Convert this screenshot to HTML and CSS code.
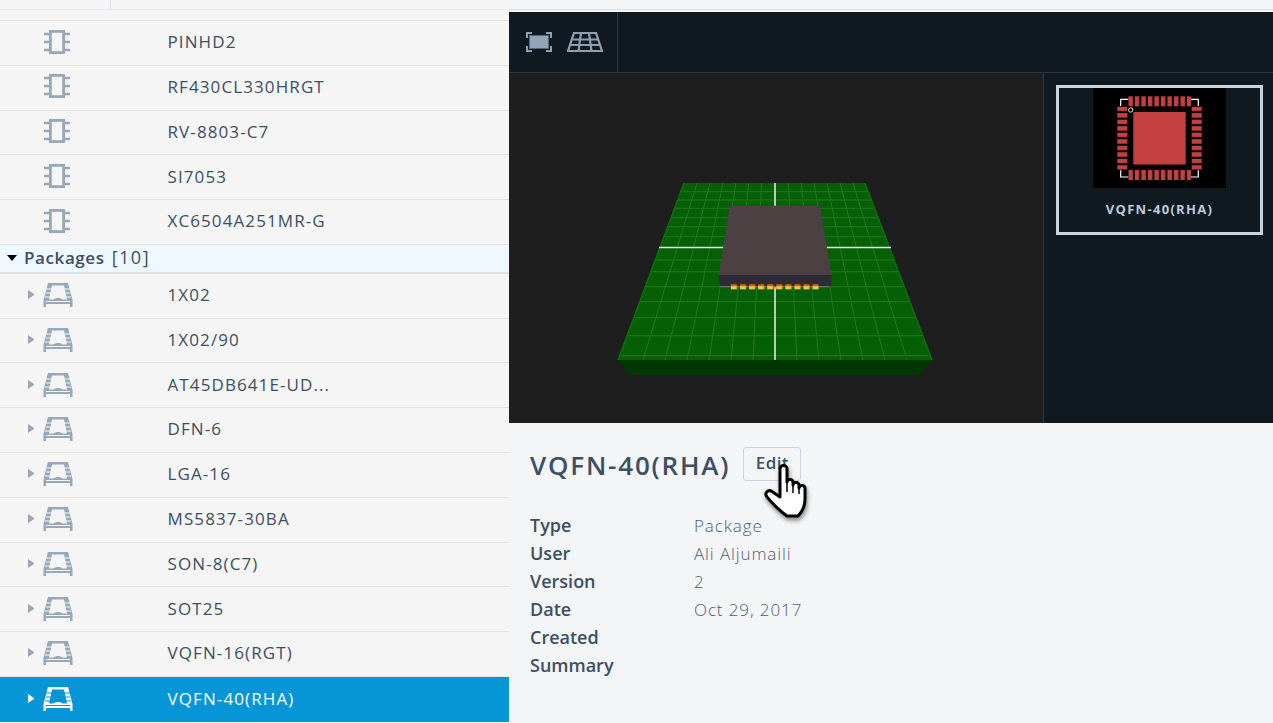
FILE: index.html
```html
<!DOCTYPE html>
<html lang="en">
<head>
    <meta charset="UTF-8">
    <meta name="viewport" content="width=device-width, initial-scale=1.0">
    <title>Library</title>
    <link rel="stylesheet" href="styles.css">
</head>
<body>
    <!-- icons used by the rows -->
    <svg class="defs" width="0" height="0">
        <symbol id="icon-chip" viewBox="0 0 26 24">
            <rect x="6.400" y="1.400" width="13.200" height="21.200" fill="none" stroke="currentColor" stroke-width="2.800"/>
            <path d="M0 4h5M21 4h5M0 12h5M21 12h5M0 20h5M21 20h5" stroke="currentColor" stroke-width="2.600"/>
        </symbol>
        <symbol id="icon-package" viewBox="0 0 30 25">
            <path fill="currentColor" fill-rule="evenodd" d="M5 1H25L29.500 18V25H27V22H3V25H.5V18ZM9 3.500 6 17.500H10.500C12.500 15.500 17.500 15.500 19.500 17.500H24L21 3.500Z"/>
            <path d="M3 7H9M3 11H8M2 15H7M21 7H27M22 11H27M23 15H28" stroke="var(--row-bg)" stroke-width="1"/>
            <path d="M3 19.500H27" stroke="var(--row-bg)" stroke-width="1"/>
        </symbol>
    </svg>

    <aside class="tree">
        <div class="tree-head"><span class="tree-head-cell"></span></div>
        <ul class="rows">
            <li class="row"><span class="cell-icon"><svg class="chip"><use href="#icon-chip"/></svg></span><span class="name">PINHD2</span></li>
            <li class="row"><span class="cell-icon"><svg class="chip"><use href="#icon-chip"/></svg></span><span class="name">RF430CL330HRGT</span></li>
            <li class="row"><span class="cell-icon"><svg class="chip"><use href="#icon-chip"/></svg></span><span class="name">RV-8803-C7</span></li>
            <li class="row"><span class="cell-icon"><svg class="chip"><use href="#icon-chip"/></svg></span><span class="name">SI7053</span></li>
            <li class="row"><span class="cell-icon"><svg class="chip"><use href="#icon-chip"/></svg></span><span class="name">XC6504A251MR-G</span></li>
        </ul>
        <div class="group"><span class="caret-down"></span><strong>Packages</strong> <span class="count">[10]</span></div>
        <ul class="rows">
            <li class="row"><span class="cell-icon"><i class="caret"></i><svg class="pkg"><use href="#icon-package"/></svg></span><span class="name">1X02</span></li>
            <li class="row"><span class="cell-icon"><i class="caret"></i><svg class="pkg"><use href="#icon-package"/></svg></span><span class="name">1X02/90</span></li>
            <li class="row"><span class="cell-icon"><i class="caret"></i><svg class="pkg"><use href="#icon-package"/></svg></span><span class="name">AT45DB641E-UD...</span></li>
            <li class="row"><span class="cell-icon"><i class="caret"></i><svg class="pkg"><use href="#icon-package"/></svg></span><span class="name">DFN-6</span></li>
            <li class="row"><span class="cell-icon"><i class="caret"></i><svg class="pkg"><use href="#icon-package"/></svg></span><span class="name">LGA-16</span></li>
            <li class="row"><span class="cell-icon"><i class="caret"></i><svg class="pkg"><use href="#icon-package"/></svg></span><span class="name">MS5837-30BA</span></li>
            <li class="row"><span class="cell-icon"><i class="caret"></i><svg class="pkg"><use href="#icon-package"/></svg></span><span class="name">SON-8(C7)</span></li>
            <li class="row"><span class="cell-icon"><i class="caret"></i><svg class="pkg"><use href="#icon-package"/></svg></span><span class="name">SOT25</span></li>
            <li class="row"><span class="cell-icon"><i class="caret"></i><svg class="pkg"><use href="#icon-package"/></svg></span><span class="name">VQFN-16(RGT)</span></li>
            <li class="row selected"><span class="cell-icon"><i class="caret"></i><svg class="pkg"><use href="#icon-package"/></svg></span><span class="name">VQFN-40(RHA)</span></li>
        </ul>
    </aside>

    <main class="detail">
        <section class="viewer">
            <div class="toolbar">
                <div class="tools">
                    <svg class="tool-fit" viewBox="0 0 26 20">
                        <path d="M1 6V1H6M20 1H25V6M25 14V19H20M6 19H1V14" fill="none" stroke="#8fa0b2" stroke-width="2"/>
                        <rect x="3.500" y="3.500" width="19" height="13" fill="#93a4b6" stroke="#55677a"/>
                    </svg>
                    <svg class="tool-grid" viewBox="0 0 36 20">
                        <path d="M7 1H29L35 19H1ZM4.500 7.500H31M2.800 13H33M14 1 11.500 19M22 1 24.500 19" fill="none" stroke="#8fa0b2" stroke-width="2.200"/>
                    </svg>
                </div>
            </div>
            <div class="stage">
                <div class="scene">
                    <svg viewBox="509 73 534 350" width="534" height="350">
                        <defs>
                            <pattern id="pkg-pads" x="731" y="284" width="9.060" height="5.500" patternUnits="userSpaceOnUse">
                                <rect width="6" height="2" fill="#b5591c"/>
                                <rect y="2" width="6" height="3.500" fill="#f6c93a"/>
                            </pattern>
                        </defs>
                        <polygon points="618,360 932,360 920,375 630,375" fill="#003600"/>
                        <polygon points="684,183 865,183 932,360 618,360" fill="#056005"/>
                        <g class="grid-lines">
                            <path d="M697.100 183 643 360M710 183 665 360M722.900 183 687 360M735.800 183 709 360M748.700 183 731 360M761.600 183 753 360M788.400 183 797 360M801.300 183 819 360M814.200 183 841 360M827.100 183 863 360M840 183 885 360M852.900 183 907 360"/>
                            <path d="M680.800 191.700H868.300M677.700 200H871.400M674.600 208.300H874.600M671.100 217.700H878.200M667.700 226.700H881.600M664 236.700H885.400M655.300 260H894.200M650.900 271.700H898.600M645.300 286.700H904.300M639.700 301.700H910M633.800 317.700H916M627 335.700H922.800M619.600 355.700H930.400"/>
                        </g>
                        <path d="M684 183 618 360M865 183 932 360" stroke="#0a700a" stroke-width="1.500"/>
                        <path d="M775 183V360M659 247.500H891" stroke="#e4e8e4" stroke-width="1.600"/>
                        <polygon points="720,286 829,286 829,287.300 720,287.300" fill="#6d7070"/>
                        <polygon points="718.700,275 831.700,275 831,286 720,286" fill="#2c2b36"/>
                        <polygon points="730,205.700 820,205.700 831.700,275 718.700,275" fill="#4b4042"/>
                        <rect x="731" y="284" width="88" height="5.500" fill="url(#pkg-pads)"/>
                    </svg>
                </div>
                <div class="thumbs">
                    <div class="thumb">
                        <svg class="thumb-img" viewBox="0 0 133 100" width="133" height="100">
                            <defs>
                                <pattern id="pads-x" x="35.300" y="0" width="6.520" height="100" patternUnits="userSpaceOnUse">
                                    <rect width="4.500" height="100" fill="#c24040"/>
                                </pattern>
                                <pattern id="pads-y" x="0" y="18.600" width="133" height="6.520" patternUnits="userSpaceOnUse">
                                    <rect width="133" height="4.500" fill="#c24040"/>
                                </pattern>
                            </defs>
                            <rect width="133" height="100" fill="#000"/>
                            <path d="M27.700 18V11.300H35.300M98 11.300H105.300V18M27.700 82.300V89H35.300M98 89H105.300V82.300" fill="none" stroke="#fff" stroke-width="1.200"/>
                            <rect x="35.300" y="8.300" width="63" height="10" fill="url(#pads-x)"/>
                            <rect x="35.300" y="82" width="63" height="10" fill="url(#pads-x)"/>
                            <rect x="24.300" y="18.600" width="10" height="63" fill="url(#pads-y)"/>
                            <rect x="98.700" y="18.600" width="10" height="63" fill="url(#pads-y)"/>
                            <rect x="40.300" y="24" width="52.400" height="52.500" fill="#c24040"/>
                            <circle cx="37.700" cy="22" r="2.200" fill="#000" stroke="#ddd" stroke-width="1"/>
                        </svg>
                        <div class="thumb-label">VQFN-40(RHA)</div>
                    </div>
                </div>
            </div>
        </section>

        <section class="info">
            <div class="title-row">
                <h1>VQFN-40(RHA)</h1>
                <button class="edit">Edit</button>
                <svg class="hand" viewBox="0 0 50 60" width="50" height="60">
                    <path d="M18 7a3.500 3.500 0 0 1 7 0V20a3 3 0 0 1 6 1v2a3 3 0 0 1 6 1v2a3 3 0 0 1 6 1V37C43 45 40 50 36 54H25C18 49 10 41 5 35 2 31 6 27 10 29.500L18 35Z" fill="#fff" stroke="#000" stroke-width="3" stroke-linejoin="round"/>
                    <path d="M25 20v10M31 23v8M37 26v6" stroke="#000" stroke-width="1.500"/>
                </svg>
            </div>
            <dl class="meta">
                <dt>Type</dt><dd>Package</dd>
                <dt>User</dt><dd>Ali Aljumaili</dd>
                <dt>Version</dt><dd>2</dd>
                <dt>Date</dt><dd>Oct 29, 2017</dd>
                <dt>Created</dt><dd></dd>
                <dt>Summary</dt><dd></dd>
            </dl>
        </section>
    </main>
</body>
</html>
```

FILE: styles.css
```css
/* Geral */
* {
    box-sizing: border-box;
}

html, body {
    height: 723px;
}

body {
    margin: 0;
    display: flex;
    overflow: hidden;
    font-family: "Open Sans", "Noto Sans", sans-serif;
    color: #3c4f63;
    background-color: #f4f5f7;
}

.defs {
    position: absolute;
}

/* Left tree */
.tree {
    width: 509px;
    flex: none;
    background-color: #f5f5f5;
}

.tree-head {
    height: 21px;
    border-bottom: 1px solid #e2e4e6;
    background: linear-gradient(#f4f5f7 0, #f4f5f7 9px, #e6e7e8 9px, #f5f5f5 11px);
}

.tree-head-cell {
    display: block;
    width: 111px;
    height: 9px;
    border-right: 1px solid #dfe2e5;
}

.rows {
    list-style: none;
    margin: 0;
    padding: 0;
}

.row {
    --row-bg: #f5f5f5;
    height: 44.8px;
    padding-bottom: 2.5px;
    display: grid;
    grid-template-columns: 167.5px 1fr;
    align-items: center;
    border-bottom: 1px solid #e2e2e2;
    font-size: 17px;
    letter-spacing: 1.1px;
}

.cell-icon {
    display: flex;
    align-items: center;
    padding-left: 28px;
    color: #98a8b8;
}

.chip {
    width: 26px;
    height: 24px;
    margin-left: 16px;
}

.pkg {
    width: 30px;
    height: 25px;
    margin-left: 9px;
}

.caret {
    flex: none;
    width: 6px;
    height: 9px;
    border-top: 4.500px solid transparent;
    border-bottom: 4.500px solid transparent;
    border-left: 6px solid #98a8b8;
}

.name {
    white-space: nowrap;
}

.selected {
    --row-bg: #0696d7;
    background-color: #0696d7;
    border-bottom: 0;
    color: #fff;
}

.selected .cell-icon {
    color: #fff;
}

.selected .caret {
    border-left-color: #fff;
}

.group {
    height: 30px;
    margin-top: -1.2px;
    padding: 0 0 2px 7px;
    display: flex;
    align-items: center;
    gap: 7px;
    background-color: #f0f8ff;
    border-top: 1px solid #dbe4ec;
    border-bottom: 2px solid #dde3e8;
    font-size: 17px;
    letter-spacing: 0.6px;
}

.group strong {
    font-weight: 600;
}

.count {
    font-size: 18px;
    letter-spacing: 1.500px;
}

.caret-down {
    width: 0;
    height: 0;
    margin-top: 2px;
    border-left: 5px solid transparent;
    border-right: 5px solid transparent;
    border-top: 6px solid #000;
}

/* Right side */
.detail {
    flex: 1;
    display: flex;
    flex-direction: column;
    background: linear-gradient(#f4f5f7 0, #f4f5f7 9px, #dfe1e3 9px, #dfe1e3 10px, #f4f5f7 10px);
    padding-top: 12px;
}

.viewer {
    height: 411px;
    display: flex;
    flex-direction: column;
    flex: none;
}

.toolbar {
    height: 61px;
    background-color: #101820;
    border-bottom: 1px solid #2a3541;
}

.tools {
    width: 109px;
    height: 60px;
    display: flex;
    align-items: center;
    gap: 15px;
    padding-left: 17px;
    border-right: 1px solid #2a3541;
}

.tool-fit {
    width: 26px;
    height: 20px;
}

.tool-grid {
    width: 36px;
    height: 20px;
}

.stage {
    flex: 1;
    display: flex;
}

.scene {
    width: 534px;
    background-color: #1e1e1e;
}

.scene svg {
    display: block;
}

.grid-lines path {
    fill: none;
    stroke: #237623;
    stroke-width: 1;
}

.thumbs {
    flex: 1;
    padding: 12px 10px 0 12px;
    background-color: #101820;
    border-left: 1px solid #2a3541;
}

.thumb {
    height: 150px;
    display: flex;
    flex-direction: column;
    align-items: center;
    border: 3px solid #c8d3e0;
}

.thumb-img {
    display: block;
    flex: none;
}

.thumb-label {
    margin-top: 12px;
    font-size: 13px;
    font-weight: 700;
    letter-spacing: 1.300px;
    color: #bccad9;
}

/* Details */
.info {
    position: relative;
    padding: 24px 21px 0;
}

.title-row {
    display: flex;
    align-items: center;
    gap: 13px;
    height: 34px;
    margin-bottom: 30px;
}

h1 {
    margin: 2px 0 0;
    font-size: 26px;
    font-weight: 600;
    letter-spacing: 1.800px;
}

.edit {
    width: 58px;
    height: 34px;
    padding: 0 0 4px;
    background-color: #f4f5f7;
    border: 1px solid #c8d3e0;
    border-radius: 3px;
    font-family: inherit;
    font-size: 17px;
    font-weight: 600;
    letter-spacing: 0.4px;
    color: #3c4f63;
}

.hand {
    position: absolute;
    left: 253px;
    top: 39px;
    filter: drop-shadow(1px 3px 2px rgba(0, 0, 0, 0.45));
}

.meta {
    display: grid;
    grid-template-columns: 164px 1fr;
    grid-auto-rows: 28px;
    align-items: center;
    margin: 0;
    font-size: 18px;
}

.meta dt {
    font-weight: 600;
}

.meta dd {
    margin: 0;
    font-size: 17px;
    font-weight: 300;
    letter-spacing: 0.9px;
    color: #4d6075;
}
```
